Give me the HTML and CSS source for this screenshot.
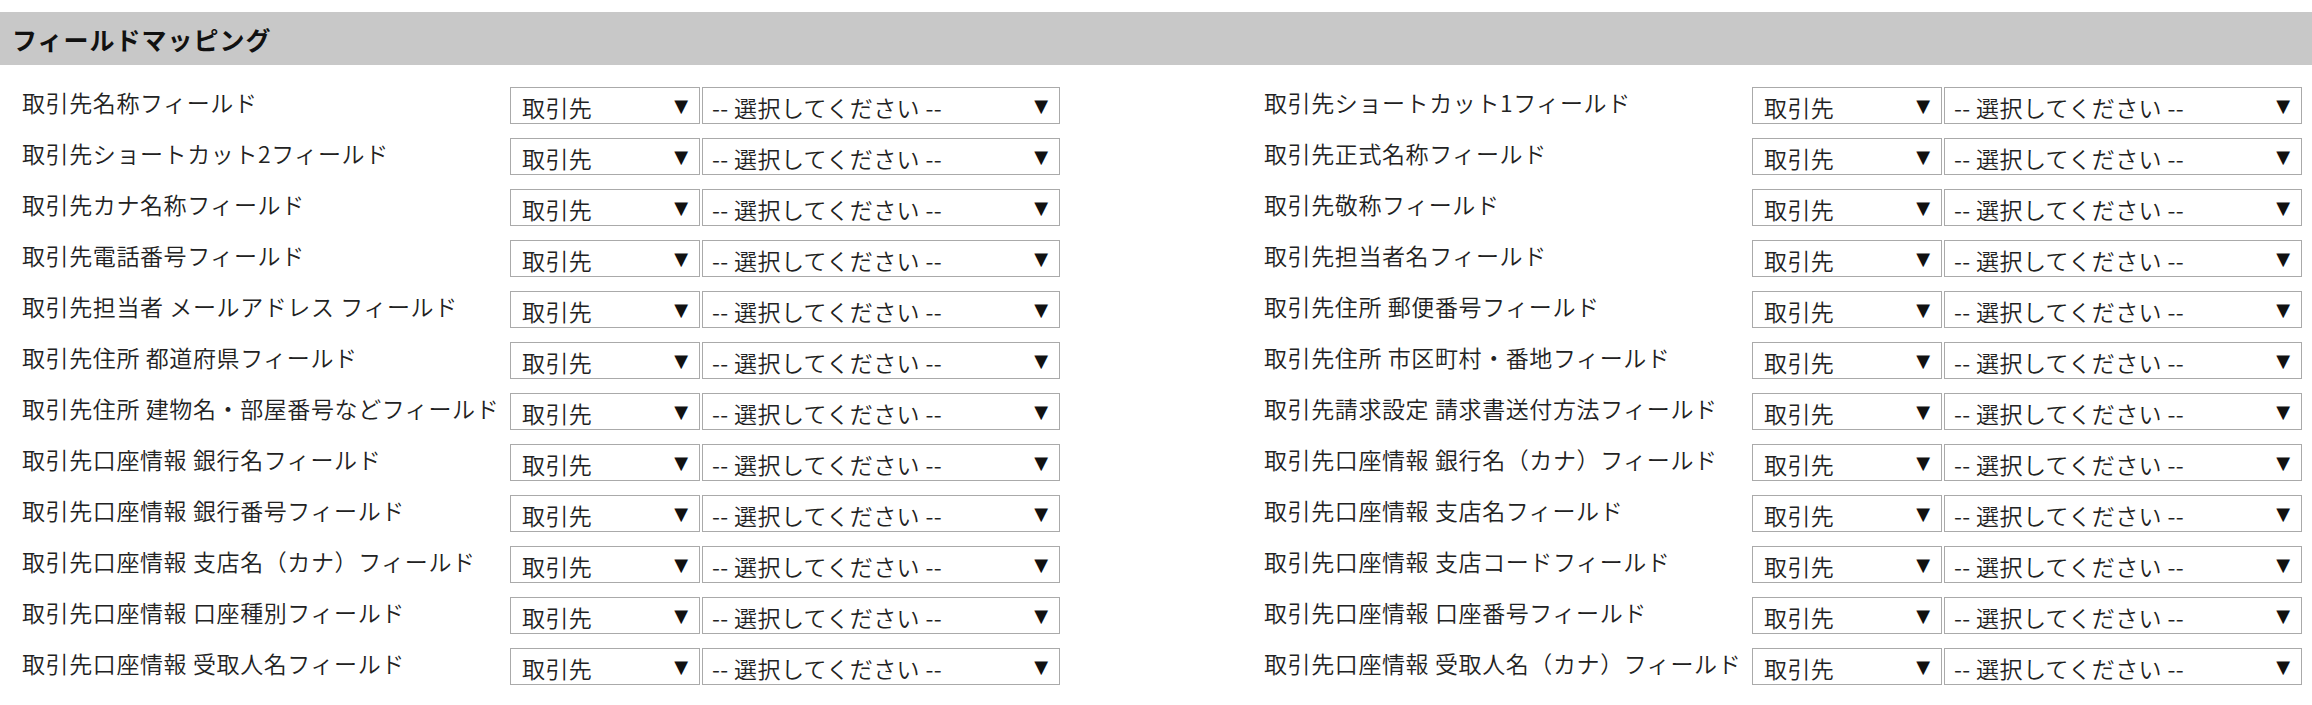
FILE: index.html
```html
<!DOCTYPE html>
<html lang="ja">
<head>
<meta charset="utf-8">
<title>フィールドマッピング</title>
<link rel="stylesheet" href="styles.css">
</head>
<body>
<div class="page">
  <h2 class="section-title">フィールドマッピング</h2>
  <div class="mapping">
    <div class="col">
      <div class="row"><div class="label">取引先名称フィールド</div><div class="sel sel-src"><span>取引先</span><span class="arrow">▼</span></div><div class="sel sel-dst"><span>-- 選択してください --</span><span class="arrow">▼</span></div></div>
      <div class="row"><div class="label">取引先ショートカット2フィールド</div><div class="sel sel-src"><span>取引先</span><span class="arrow">▼</span></div><div class="sel sel-dst"><span>-- 選択してください --</span><span class="arrow">▼</span></div></div>
      <div class="row"><div class="label">取引先カナ名称フィールド</div><div class="sel sel-src"><span>取引先</span><span class="arrow">▼</span></div><div class="sel sel-dst"><span>-- 選択してください --</span><span class="arrow">▼</span></div></div>
      <div class="row"><div class="label">取引先電話番号フィールド</div><div class="sel sel-src"><span>取引先</span><span class="arrow">▼</span></div><div class="sel sel-dst"><span>-- 選択してください --</span><span class="arrow">▼</span></div></div>
      <div class="row"><div class="label">取引先担当者 メールアドレス フィールド</div><div class="sel sel-src"><span>取引先</span><span class="arrow">▼</span></div><div class="sel sel-dst"><span>-- 選択してください --</span><span class="arrow">▼</span></div></div>
      <div class="row"><div class="label">取引先住所 都道府県フィールド</div><div class="sel sel-src"><span>取引先</span><span class="arrow">▼</span></div><div class="sel sel-dst"><span>-- 選択してください --</span><span class="arrow">▼</span></div></div>
      <div class="row"><div class="label">取引先住所 建物名・部屋番号などフィールド</div><div class="sel sel-src"><span>取引先</span><span class="arrow">▼</span></div><div class="sel sel-dst"><span>-- 選択してください --</span><span class="arrow">▼</span></div></div>
      <div class="row"><div class="label">取引先口座情報 銀行名フィールド</div><div class="sel sel-src"><span>取引先</span><span class="arrow">▼</span></div><div class="sel sel-dst"><span>-- 選択してください --</span><span class="arrow">▼</span></div></div>
      <div class="row"><div class="label">取引先口座情報 銀行番号フィールド</div><div class="sel sel-src"><span>取引先</span><span class="arrow">▼</span></div><div class="sel sel-dst"><span>-- 選択してください --</span><span class="arrow">▼</span></div></div>
      <div class="row"><div class="label">取引先口座情報 支店名（カナ）フィールド</div><div class="sel sel-src"><span>取引先</span><span class="arrow">▼</span></div><div class="sel sel-dst"><span>-- 選択してください --</span><span class="arrow">▼</span></div></div>
      <div class="row"><div class="label">取引先口座情報 口座種別フィールド</div><div class="sel sel-src"><span>取引先</span><span class="arrow">▼</span></div><div class="sel sel-dst"><span>-- 選択してください --</span><span class="arrow">▼</span></div></div>
      <div class="row"><div class="label">取引先口座情報 受取人名フィールド</div><div class="sel sel-src"><span>取引先</span><span class="arrow">▼</span></div><div class="sel sel-dst"><span>-- 選択してください --</span><span class="arrow">▼</span></div></div>
    </div>
    <div class="col">
      <div class="row"><div class="label">取引先ショートカット1フィールド</div><div class="sel sel-src"><span>取引先</span><span class="arrow">▼</span></div><div class="sel sel-dst"><span>-- 選択してください --</span><span class="arrow">▼</span></div></div>
      <div class="row"><div class="label">取引先正式名称フィールド</div><div class="sel sel-src"><span>取引先</span><span class="arrow">▼</span></div><div class="sel sel-dst"><span>-- 選択してください --</span><span class="arrow">▼</span></div></div>
      <div class="row"><div class="label">取引先敬称フィールド</div><div class="sel sel-src"><span>取引先</span><span class="arrow">▼</span></div><div class="sel sel-dst"><span>-- 選択してください --</span><span class="arrow">▼</span></div></div>
      <div class="row"><div class="label">取引先担当者名フィールド</div><div class="sel sel-src"><span>取引先</span><span class="arrow">▼</span></div><div class="sel sel-dst"><span>-- 選択してください --</span><span class="arrow">▼</span></div></div>
      <div class="row"><div class="label">取引先住所 郵便番号フィールド</div><div class="sel sel-src"><span>取引先</span><span class="arrow">▼</span></div><div class="sel sel-dst"><span>-- 選択してください --</span><span class="arrow">▼</span></div></div>
      <div class="row"><div class="label">取引先住所 市区町村・番地フィールド</div><div class="sel sel-src"><span>取引先</span><span class="arrow">▼</span></div><div class="sel sel-dst"><span>-- 選択してください --</span><span class="arrow">▼</span></div></div>
      <div class="row"><div class="label">取引先請求設定 請求書送付方法フィールド</div><div class="sel sel-src"><span>取引先</span><span class="arrow">▼</span></div><div class="sel sel-dst"><span>-- 選択してください --</span><span class="arrow">▼</span></div></div>
      <div class="row"><div class="label">取引先口座情報 銀行名（カナ）フィールド</div><div class="sel sel-src"><span>取引先</span><span class="arrow">▼</span></div><div class="sel sel-dst"><span>-- 選択してください --</span><span class="arrow">▼</span></div></div>
      <div class="row"><div class="label">取引先口座情報 支店名フィールド</div><div class="sel sel-src"><span>取引先</span><span class="arrow">▼</span></div><div class="sel sel-dst"><span>-- 選択してください --</span><span class="arrow">▼</span></div></div>
      <div class="row"><div class="label">取引先口座情報 支店コードフィールド</div><div class="sel sel-src"><span>取引先</span><span class="arrow">▼</span></div><div class="sel sel-dst"><span>-- 選択してください --</span><span class="arrow">▼</span></div></div>
      <div class="row"><div class="label">取引先口座情報 口座番号フィールド</div><div class="sel sel-src"><span>取引先</span><span class="arrow">▼</span></div><div class="sel sel-dst"><span>-- 選択してください --</span><span class="arrow">▼</span></div></div>
      <div class="row"><div class="label">取引先口座情報 受取人名（カナ）フィールド</div><div class="sel sel-src"><span>取引先</span><span class="arrow">▼</span></div><div class="sel sel-dst"><span>-- 選択してください --</span><span class="arrow">▼</span></div></div>
    </div>
  </div>
</div>
</body>
</html>
```

FILE: styles.css
```css
html, body {
  margin: 0;
  padding: 0;
  background: #ffffff;
}

body {
  font-family: "Noto Sans CJK JP", "Noto Sans", sans-serif;
  color: #222222;
}

.page {
  padding-top: 12px;
}

.section-title {
  margin: 0;
  height: 53px;
  display: flex;
  align-items: center;
  padding-left: 12px;
  background: #c8c8c8;
  font-size: 25px;
  letter-spacing: 1px;
  font-weight: bold;
  color: #111111;
}

.mapping {
  display: flex;
  justify-content: space-between;
  padding: 22px 10px 0 22px;
}

.col {
  display: flex;
  flex-direction: column;
  gap: 14px;
}

.row {
  display: flex;
  align-items: flex-start;
  height: 37px;
}

.label {
  width: 488px;
  flex: none;
  font-size: 23px;
  letter-spacing: 0.6px;
  font-weight: 350;
  line-height: 30px;
  color: #222222;
  white-space: nowrap;
}

.sel {
  box-sizing: border-box;
  height: 37px;
  border: 1px solid #aaaaaa;
  background: #ffffff;
  display: flex;
  align-items: center;
  justify-content: space-between;
  font-size: 23px;
  letter-spacing: 0.4px;
  font-weight: 350;
  color: #222222;
  padding-top: 3px;
  flex: none;
}

.sel-src {
  width: 190px;
  padding-left: 11px;
  padding-right: 11px;
}

.sel-dst {
  width: 358px;
  margin-left: 2px;
  padding-left: 9px;
  padding-right: 11px;
}

.arrow {
  font-family: "DejaVu Sans", sans-serif;
  font-size: 18px;
  font-weight: 400;
  letter-spacing: 0;
  color: #111111;
  padding-bottom: 3px;
}
```
